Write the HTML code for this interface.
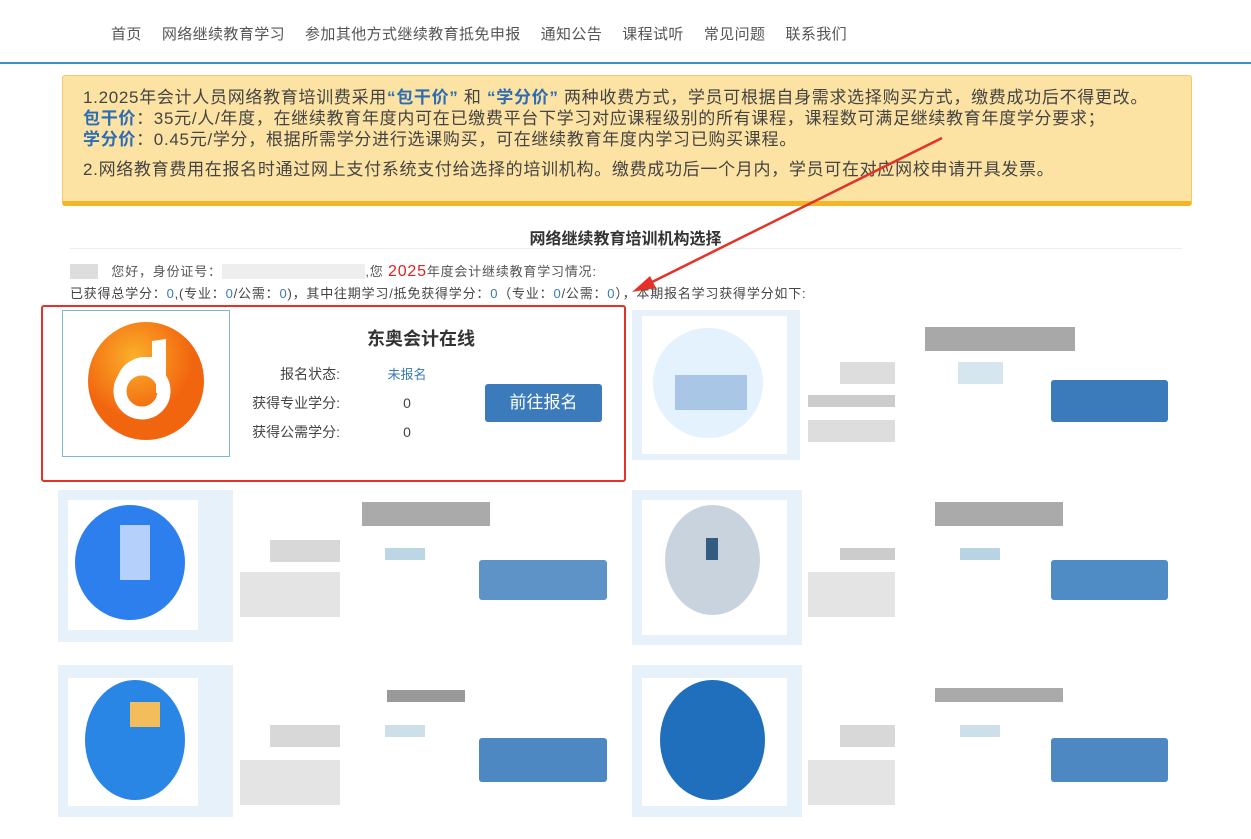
<!DOCTYPE html>
<html><head><meta charset="utf-8"><style>
*{margin:0;padding:0;box-sizing:border-box}
body{width:1251px;height:839px;background:#fff;position:relative;overflow:hidden;font-family:"Liberation Sans","Noto Sans CJK SC",sans-serif;color:#333}
.a{position:absolute}
.nav{top:23px;left:111px;font-size:15px;color:#555;white-space:nowrap;letter-spacing:0.4px}
.nav span{margin-right:20px}
.note{left:62px;top:75px;width:1130px;height:131px;background:#fde3a3;border:1px solid #f3c86a;border-bottom:5px solid #f3b628;border-radius:3px;padding:11px 0 0 20px;font-size:17px;line-height:21px;color:#444;letter-spacing:0.7px;white-space:nowrap}
.b{color:#2d6db3;font-weight:bold}
.g{background:#ccc}
.lb{background:#e6f1fa}
.btn{background:#3b7bbb;color:#fff;border-radius:3px;font-size:17px;text-align:center}
.s{font-size:13px;letter-spacing:0.8px;white-space:nowrap}
</style></head><body>
<div class="a nav"><span>首页</span><span>网络继续教育学习</span><span>参加其他方式继续教育抵免申报</span><span>通知公告</span><span>课程试听</span><span>常见问题</span><span>联系我们</span></div>
<div class="a" style="left:0;top:62px;width:1251px;height:2px;background:#3a92c8"></div>
<div class="a note">1.2025年会计人员网络教育培训费采用<span class="b">“包干价”</span> 和 <span class="b">“学分价”</span> 两种收费方式，学员可根据自身需求选择购买方式，缴费成功后不得更改。<br><span class="b">包干价</span>：35元/人/年度，在继续教育年度内可在已缴费平台下学习对应课程级别的所有课程，课程数可满足继续教育年度学分要求；<br><span class="b">学分价</span>：0.45元/学分，根据所需学分进行选课购买，可在继续教育年度内学习已购买课程。<div style="margin-top:9px">2.网络教育费用在报名时通过网上支付系统支付给选择的培训机构。缴费成功后一个月内，学员可在对应网校申请开具发票。</div></div>
<div class="a" style="left:0;width:1251px;top:225px;text-align:center;font-size:16px;font-weight:bold;color:#333">网络继续教育培训机构选择</div>
<div class="a" style="left:70px;top:248px;width:1112px;height:1px;background:#eee"></div>
<div class="a s" style="left:70px;top:261px;color:#555"><span style="background:#ddd;color:#ddd">某某</span>　您好，身份证号：<span style="background:#eee;color:#eee">110000000000000000</span>,您 <span style="color:#d22;font-size:16px">2025</span>年度会计继续教育学习情况:</div>
<div class="a s" style="left:70px;top:283px;color:#444">已获得总学分：<span style="color:#3a7ab8">0</span>,(专业：<span style="color:#3a7ab8">0</span>/公需：<span style="color:#3a7ab8">0</span>)，其中往期学习/抵免获得学分：<span style="color:#3a7ab8">0</span>（专业：<span style="color:#3a7ab8">0</span>/公需：<span style="color:#3a7ab8">0</span>），本期报名学习获得学分如下:</div>
<svg class="a" style="left:620px;top:130px" width="330" height="170"><line x1="322" y1="8" x2="20" y2="158" stroke="#e53228" stroke-width="2.5"/><polygon points="12,162 30,146 36,158" fill="#e53228"/></svg>
<div class="a" style="left:41px;top:305px;width:585px;height:177px;border:2px solid #e53228;border-radius:3px"></div>
<div class="a" style="left:62px;top:310px;width:168px;height:147px;border:1px solid #7fb5cf"></div>
<svg class="a" style="left:86px;top:321px" width="120" height="120"><defs><radialGradient id="o" cx="40%" cy="30%"><stop offset="0" stop-color="#fbb02a"/><stop offset="1" stop-color="#f2650f"/></radialGradient></defs><ellipse cx="60" cy="60" rx="58" ry="59" fill="url(#o)"/><circle cx="56" cy="70" r="22" fill="none" stroke="#fff" stroke-width="13"/><path d="M30 62 Q34 40 56 36 L66 36 L66 20 L80 18 L80 72 L70 72 L70 48 L58 48 Q44 50 40 62 Z" fill="#fff"/></svg>
<div class="a" style="left:367px;top:325px;font-size:18px;font-weight:bold;color:#333">东奥会计在线</div>
<div class="a" style="left:230px;top:360px;width:110px;text-align:right;font-size:14px;line-height:29px;color:#444">报名状态:<br>获得专业学分:<br>获得公需学分:</div>
<div class="a" style="left:380px;top:360px;width:54px;text-align:center;font-size:14px;line-height:29px;color:#444"><span style="color:#3a7ab8;font-size:13px">未报名</span><br>0<br>0</div>
<div class="a btn" style="left:485px;top:384px;width:117px;height:38px;line-height:38px">前往报名</div>

<div class="a lb" style="left:632px;top:310px;width:168px;height:150px"></div><div class="a" style="left:642px;top:316px;width:145px;height:138px;background:#fff"></div>
<div class="a" style="left:653px;top:328px;width:110px;height:110px;border-radius:50%;background:#e3f2fc"></div>
<div class="a" style="left:675px;top:375px;width:72px;height:35px;background:#a9c6e6"></div>
<div class="a g" style="left:925px;top:327px;width:150px;height:24px;background:#a8a8a8"></div>
<div class="a g" style="left:840px;top:362px;width:55px;height:22px;background:#ddd"></div><div class="a" style="left:958px;top:362px;width:45px;height:22px;background:#d5e6ef"></div>
<div class="a g" style="left:808px;top:395px;width:87px;height:12px"></div><div class="a g" style="left:808px;top:420px;width:87px;height:22px;background:#ddd"></div>
<div class="a btn" style="left:1051px;top:380px;width:117px;height:42px"></div>

<div class="a lb" style="left:58px;top:490px;width:175px;height:152px"></div><div class="a" style="left:68px;top:500px;width:130px;height:130px;background:#fff"></div>
<div class="a" style="left:75px;top:505px;width:110px;height:115px;border-radius:50%;background:#2d7fee"></div>
<div class="a" style="left:120px;top:525px;width:30px;height:55px;background:#b4d0fb"></div>
<div class="a g" style="left:362px;top:502px;width:128px;height:24px;background:#aaa"></div>
<div class="a" style="left:270px;top:540px;width:70px;height:22px;background:#d8d8d8"></div><div class="a" style="left:385px;top:548px;width:40px;height:12px;background:#bcd6e3"></div>
<div class="a" style="left:240px;top:572px;width:100px;height:45px;background:#e4e4e4"></div>
<div class="a btn" style="left:479px;top:560px;width:128px;height:40px;background:#5d93c6"></div>

<div class="a lb" style="left:632px;top:490px;width:170px;height:155px"></div><div class="a" style="left:642px;top:500px;width:145px;height:135px;background:#fff"></div>
<div class="a" style="left:665px;top:505px;width:95px;height:110px;border-radius:50%;background:#c8d3de"></div>
<div class="a" style="left:706px;top:538px;width:12px;height:22px;background:#345b80"></div>
<div class="a g" style="left:935px;top:502px;width:128px;height:24px;background:#aaa"></div>
<div class="a" style="left:840px;top:548px;width:55px;height:12px;background:#ccc"></div><div class="a" style="left:960px;top:548px;width:40px;height:12px;background:#b8d3e2"></div>
<div class="a" style="left:808px;top:572px;width:87px;height:45px;background:#e4e4e4"></div>
<div class="a btn" style="left:1051px;top:560px;width:117px;height:40px;background:#4f8bc4"></div>

<div class="a lb" style="left:58px;top:665px;width:175px;height:152px"></div><div class="a" style="left:68px;top:678px;width:130px;height:128px;background:#fff"></div>
<div class="a" style="left:85px;top:680px;width:100px;height:120px;border-radius:50%;background:#2a86e4"></div>
<div class="a" style="left:130px;top:702px;width:30px;height:25px;background:#f2bd5a"></div>
<div class="a g" style="left:387px;top:690px;width:78px;height:12px;background:#999"></div>
<div class="a" style="left:270px;top:725px;width:70px;height:22px;background:#d8d8d8"></div><div class="a" style="left:385px;top:725px;width:40px;height:12px;background:#cde0ea"></div>
<div class="a" style="left:240px;top:760px;width:100px;height:45px;background:#e4e4e4"></div>
<div class="a btn" style="left:479px;top:738px;width:128px;height:44px;background:#4d88c2"></div>

<div class="a lb" style="left:632px;top:665px;width:170px;height:152px"></div><div class="a" style="left:642px;top:678px;width:145px;height:128px;background:#fff"></div>
<div class="a" style="left:660px;top:680px;width:105px;height:120px;border-radius:50%;background:#1f6fbd"></div>
<div class="a g" style="left:935px;top:688px;width:128px;height:14px;background:#aaa"></div>
<div class="a" style="left:840px;top:725px;width:55px;height:22px;background:#d8d8d8"></div><div class="a" style="left:960px;top:725px;width:40px;height:12px;background:#cde0ea"></div>
<div class="a" style="left:808px;top:760px;width:87px;height:45px;background:#e4e4e4"></div>
<div class="a btn" style="left:1051px;top:738px;width:117px;height:44px;background:#4d88c2"></div>
</body></html>
